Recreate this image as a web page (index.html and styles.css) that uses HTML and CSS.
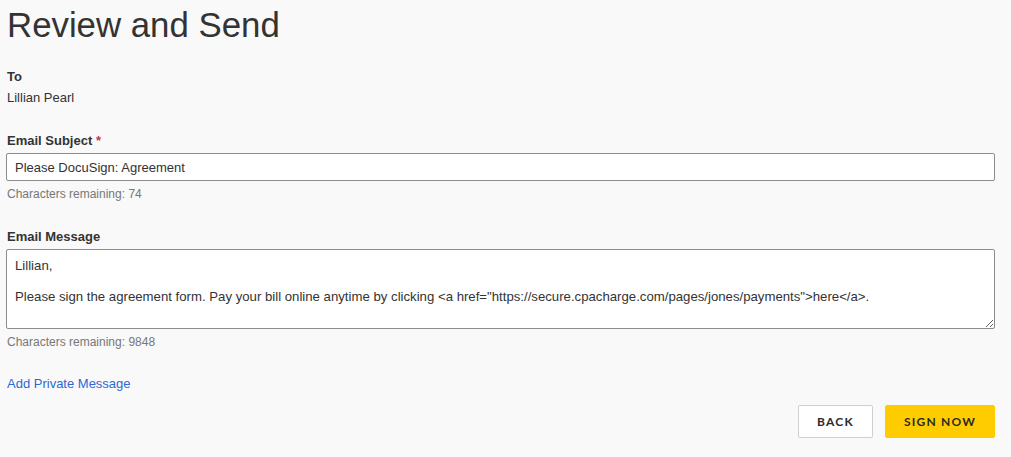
FILE: index.html
```html
<!DOCTYPE html>
<html lang="en">
<head>
<meta charset="utf-8">
<title>Review and Send</title>
<link rel="stylesheet" href="styles.css">
</head>
<body>
<main class="page">
  <h1 class="title">Review and Send</h1>

  <section class="field field-to">
    <div class="label">To</div>
    <div class="value">Lillian Pearl</div>
  </section>

  <section class="field">
    <label class="label" for="subject">Email Subject <span class="req">*</span></label>
    <input id="subject" class="input" type="text" value="Please DocuSign: Agreement">
    <div class="hint">Characters remaining: 74</div>
  </section>

  <section class="field">
    <label class="label" for="message">Email Message</label>
    <textarea id="message" class="textarea">Lillian,

Please sign the agreement form. Pay your bill online anytime by clicking &lt;a href="https://secure.cpacharge.com/pages/jones/payments"&gt;here&lt;/a&gt;.</textarea>
    <div class="hint">Characters remaining: 9848</div>
  </section>

  <a class="link" href="#">Add Private Message</a>

  <div class="actions">
    <button class="btn btn-back" type="button">BACK</button>
    <button class="btn btn-primary" type="button">SIGN NOW</button>
  </div>
</main>
</body>
</html>
```

FILE: styles.css
```css
html, body {
  margin: 0;
  padding: 0;
  background: #f9f9f9;
}

body {
  font-family: "Liberation Sans", Arial, Helvetica, sans-serif;
  color: #333;
  font-size: 13px;
  line-height: 15px;
}

.page {
  padding: 0 16px 0 6px;
}

.title {
  margin: 0 0 27px 0;
  padding-top: 7px;
  font-size: 34.8px;
  line-height: 35px;
  font-weight: 400;
  color: #333;
  padding-left: 1px;
}

.field {
  display: flex;
  flex-direction: column;
  margin-bottom: 28px;
}

.label {
  display: block;
  font-weight: 700;
  color: #333;
  margin-bottom: 5px;
  padding-left: 1px;
}

.field-to .value {
  margin-top: 1px;
  padding-left: 1px;
}

.req {
  color: #d0323a;
}

.input {
  box-sizing: border-box;
  width: 100%;
  height: 28px;
  margin: 0;
  padding: 0 8px;
  border: 1px solid #8c8c8c;
  border-radius: 2px;
  background: #fff;
  font-family: "Liberation Sans", Arial, Helvetica, sans-serif;
  font-size: 13px;
  line-height: 15px;
  color: #333;
  outline: none;
}

.textarea {
  box-sizing: border-box;
  width: 100%;
  height: 80px;
  margin: 0;
  padding: 8px 8px;
  border: 1px solid #8c8c8c;
  border-radius: 2px;
  background: #fff;
  font-family: "Liberation Sans", Arial, Helvetica, sans-serif;
  font-size: 13.2px;
  line-height: 15.5px;
  color: #333;
  resize: vertical;
  outline: none;
  display: block;
}

.hint {
  margin-top: 6px;
  font-size: 12px;
  line-height: 14px;
  color: #777;
  padding-left: 1px;
}

.field-to {
  margin-bottom: 28px;
}

.link {
  display: block;
  width: max-content;
  margin-top: -1px;
  color: #2b69d6;
  text-decoration: none;
  font-size: 13px;
  line-height: 15px;
  padding-left: 1px;
}

.actions {
  display: flex;
  justify-content: flex-end;
  gap: 12px;
  margin-top: 14px;
}

.btn {
  box-sizing: border-box;
  height: 33px;
  padding: 0;
  border-radius: 2px;
  font-family: Lato, "Noto Sans", sans-serif;
  font-weight: 700;
  font-size: 12px;
  letter-spacing: 1.2px;
  color: #2a2a2a;
  white-space: nowrap;
  text-align: center;
  cursor: pointer;
}

.btn-back {
  width: 75px;
  background: #fff;
  border: 1px solid #cfcfcf;
}

.btn-primary {
  width: 110px;
  background: #ffcc00;
  border: 1px solid #ffcc00;
}
```
